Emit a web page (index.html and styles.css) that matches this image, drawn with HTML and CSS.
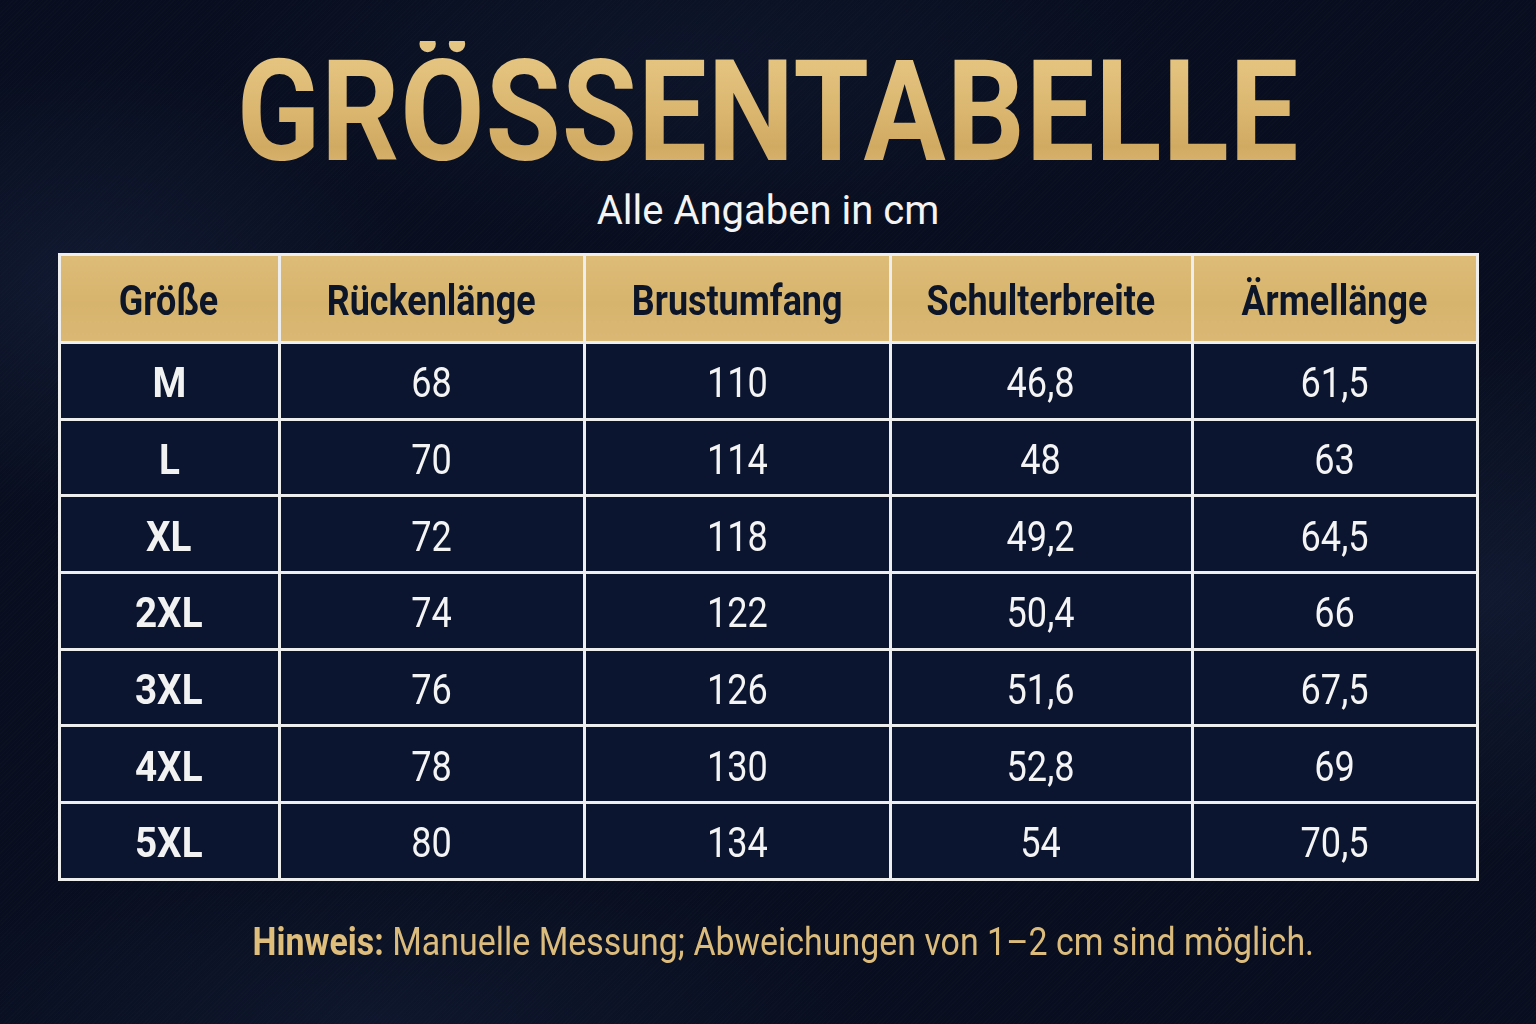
FILE: index.html
```html
<!DOCTYPE html>
<html lang="de">
<head>
<meta charset="utf-8">
<title>Größentabelle</title>
<link rel="stylesheet" href="styles.css">
</head>
<body>
<main class="page">
  <h1 class="title"><span class="title-text">GRÖSSENTABELLE</span></h1>
  <p class="subtitle">Alle Angaben in cm</p>
  <table class="size-table">
    <colgroup>
      <col class="c1"><col class="c2"><col class="c3"><col class="c4"><col class="c5">
    </colgroup>
    <thead>
      <tr>
        <th><span class="hd">Größe</span></th>
        <th><span class="hd">Rückenlänge</span></th>
        <th><span class="hd">Brustumfang</span></th>
        <th><span class="hd">Schulterbreite</span></th>
        <th><span class="hd">Ärmellänge</span></th>
      </tr>
    </thead>
    <tbody>
      <tr><td><span class="sz">M</span></td><td><span class="num">68</span></td><td><span class="num">110</span></td><td><span class="num">46,8</span></td><td><span class="num">61,5</span></td></tr>
      <tr><td><span class="sz">L</span></td><td><span class="num">70</span></td><td><span class="num">114</span></td><td><span class="num">48</span></td><td><span class="num">63</span></td></tr>
      <tr><td><span class="sz">XL</span></td><td><span class="num">72</span></td><td><span class="num">118</span></td><td><span class="num">49,2</span></td><td><span class="num">64,5</span></td></tr>
      <tr><td><span class="sz">2XL</span></td><td><span class="num">74</span></td><td><span class="num">122</span></td><td><span class="num">50,4</span></td><td><span class="num">66</span></td></tr>
      <tr><td><span class="sz">3XL</span></td><td><span class="num">76</span></td><td><span class="num">126</span></td><td><span class="num">51,6</span></td><td><span class="num">67,5</span></td></tr>
      <tr><td><span class="sz">4XL</span></td><td><span class="num">78</span></td><td><span class="num">130</span></td><td><span class="num">52,8</span></td><td><span class="num">69</span></td></tr>
      <tr><td><span class="sz">5XL</span></td><td><span class="num">80</span></td><td><span class="num">134</span></td><td><span class="num">54</span></td><td><span class="num">70,5</span></td></tr>
    </tbody>
  </table>
  <p class="note"><span class="note-text"><strong>Hinweis:</strong> Manuelle Messung; Abweichungen von 1–2 cm sind möglich.</span></p>
</main>
</body>
</html>
```

FILE: styles.css
```css
html, body {
  margin: 0;
  padding: 0;
}

body {
  width: 1536px;
  height: 1024px;
  overflow: hidden;
  font-family: Roboto, "Liberation Sans", sans-serif;
  background-color: #080e1f;
  background-image:
    radial-gradient(ellipse 460px 320px at 6% 28%, rgba(32, 46, 82, 0.35), transparent 70%),
    radial-gradient(ellipse 520px 380px at 97% 58%, rgba(30, 44, 78, 0.35), transparent 70%),
    radial-gradient(ellipse 700px 260px at 45% 6%, rgba(24, 36, 66, 0.3), transparent 70%),
    radial-gradient(ellipse 700px 260px at 25% 100%, rgba(28, 42, 76, 0.3), transparent 70%),
    repeating-linear-gradient(135deg, rgba(255, 255, 255, 0.012) 0 1px, transparent 1px 3px);
}

.page {
  display: flex;
  flex-direction: column;
  align-items: center;
}

.title {
  margin: 0;
  padding-top: 41px;
  font-size: 141px;
  line-height: 141px;
  font-weight: 700;
  letter-spacing: 1px;
}

.title-text {
  display: inline-block;
  transform: scaleX(0.868);
  background: linear-gradient(180deg, #e6c683 0%, #e3c27e 20%, #dab66f 50%, #d1aa62 75%, #dfbd7a 100%);
  -webkit-background-clip: text;
  background-clip: text;
  color: transparent;
}

.subtitle {
  margin: 9px 0 0;
  font-size: 40px;
  line-height: 40px;
  color: #f4f4f4;
}

.size-table {
  margin-top: 22px;
  width: 1418px;
  border-collapse: collapse;
  table-layout: fixed;
  border: 3px solid #eeeeee;
}

.c1 { width: 220px; }
.c2 { width: 305px; }
.c3 { width: 306px; }
.c4 { width: 302px; }
.c5 { width: 285px; }

.size-table th,
.size-table td {
  border: 3px solid #eeeeee;
  padding: 0;
  text-align: center;
  vertical-align: middle;
}

.size-table th {
  height: 82px;
  padding-top: 3px;
  background: linear-gradient(180deg, #ddbc78 0%, #d7b46d 55%, #dab875 100%);
}

.size-table td {
  height: 69.7px;
  padding-top: 4px;
  background: #0b1530;
}

.hd {
  display: inline-block;
  font-size: 43px;
  font-weight: 700;
  color: #0d1628;
  transform: scaleX(0.835);
  white-space: nowrap;
}

.sz {
  display: inline-block;
  font-size: 42px;
  font-weight: 700;
  color: #f2f2f2;
  transform: scaleX(0.92);
}

.num {
  display: inline-block;
  font-size: 42px;
  font-weight: 400;
  color: #f4f4f4;
  transform: scaleX(0.86);
}

.note {
  margin: 42px 0 0 30px;
  font-size: 38px;
  line-height: 38px;
  color: #dcbc7c;
  white-space: nowrap;
}

.note-text {
  display: inline-block;
  transform: scaleX(0.893);
}

.note strong {
  font-weight: 700;
  color: #dfbd7b;
}
```
